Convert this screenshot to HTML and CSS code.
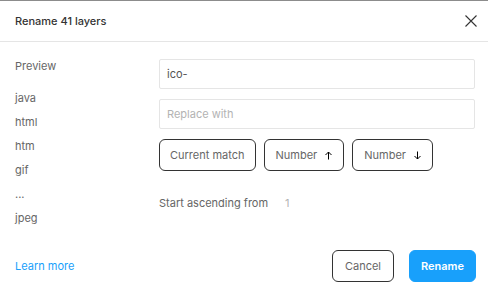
FILE: index.html
```html
<!DOCTYPE html>
<html lang="en">

<head>
    <meta charset="UTF-8">
    <meta name="viewport" content="width=device-width, initial-scale=1.0">
    <title>Rename layers</title>
    <link rel="stylesheet" href="styles.css">
</head>

<body>
    <div class="dialog">
        <div class="header">
            <span class="title">Rename 41 layers</span>
            <a class="close" href="javascript:;">
                <svg width="12" height="12" viewBox="0 0 12 12">
                    <path d="M0.5 0.5 L11.5 11.5 M11.5 0.5 L0.5 11.5" stroke="#333" stroke-width="1.1" fill="none" />
                </svg>
            </a>
        </div>
        <div class="content">
            <div class="preview">
                <div class="label">Preview</div>
                <ul>
                    <li>java</li>
                    <li>html</li>
                    <li>htm</li>
                    <li>gif</li>
                    <li>...</li>
                    <li>jpeg</li>
                </ul>
            </div>
            <div class="form">
                <input class="field" type="text" value="ico-">
                <input class="field" type="text" placeholder="Replace with">
                <div class="chips">
                    <a class="btn" href="javascript:;">Current match</a>
                    <a class="btn num-btn" href="javascript:;">Number
                        <svg class="arrow" width="7" height="9" viewBox="0 0 7 9">
                            <path d="M3.5 8.5 V1 M0.5 4 L3.5 1 L6.5 4" stroke="#000" stroke-width="1" fill="none" />
                        </svg>
                    </a>
                    <a class="btn num-btn" href="javascript:;">Number
                        <svg class="arrow" width="7" height="9" viewBox="0 0 7 9">
                            <path d="M3.5 0.5 V8 M0.5 5 L3.5 8 L6.5 5" stroke="#000" stroke-width="1" fill="none" />
                        </svg>
                    </a>
                </div>
                <div class="start">
                    <span>Start ascending from</span>
                    <span class="num">1</span>
                </div>
            </div>
        </div>
        <div class="footer">
            <a class="learn" href="javascript:;">Learn more</a>
            <div class="actions">
                <a class="btn cancel" href="javascript:;">Cancel</a>
                <a class="btn primary" href="javascript:;">Rename</a>
            </div>
        </div>
    </div>
</body>

</html>
```

FILE: styles.css
```css
* {
    padding: 0;
    margin: 0;
    box-sizing: border-box;
}

body {
    font-family: Inter, "Liberation Sans", sans-serif;
    font-size: 11px;
    color: #666;
    background: #fff;
}

a {
    text-decoration: none;
}

.dialog {
    width: 488px;
    height: 295px;
    border-top: 1px solid #8c8c8c;
    display: flex;
    flex-direction: column;
}

.header {
    height: 41px;
    border-bottom: 1px solid #e5e5e5;
    display: flex;
    align-items: center;
    justify-content: space-between;
    padding: 0 11px 0 15px;
}

.title {
    font-weight: 500;
    color: #333;
}

.close {
    display: flex;
    width: 12px;
    height: 12px;
}

.content {
    flex: 1;
    display: flex;
}

/* 左边预览列表 */
.preview {
    width: 159px;
    padding: 16px 0 0 15px;
    line-height: 16px;
}

.preview .label {
    margin-bottom: 16px;
}

.preview li {
    list-style: none;
    height: 24px;
}

/* 右边表单 */
.form {
    flex: 1;
    padding: 17px 13px 0 0;
    display: flex;
    flex-direction: column;
    gap: 10px;
}

.field {
    height: 30px;
    border: 1px solid #e5e5e5;
    border-radius: 2px;
    padding: 0 7px;
    font-family: inherit;
    font-size: 11px;
    color: #555;
    outline: none;
}

.field::placeholder {
    color: #b3b3b3;
}

.chips {
    display: flex;
    gap: 8px;
}

.btn {
    height: 32px;
    display: inline-flex;
    align-items: center;
    gap: 6px;
    padding: 0 10px;
    border: 1px solid #333;
    border-radius: 6px;
    color: #666;
}

.num-btn {
    padding: 0 11px;
    gap: 8px;
}

.arrow {
    margin-top: 1px;
}

.start {
    margin-top: 14px;
    line-height: 16px;
    display: flex;
    gap: 17px;
}

.start .num {
    color: #b3b3b3;
}

.footer {
    display: flex;
    justify-content: space-between;
    align-items: center;
    padding: 0 12px 13px 15px;
}

.learn {
    color: #18a0fb;
}

.actions {
    display: flex;
    gap: 15px;
}

.cancel {
    padding: 0 12px;
}

.primary {
    padding: 0 11px;
    background: #18a0fb;
    border-color: #18a0fb;
    color: #fff;
    font-weight: 600;
}
```
